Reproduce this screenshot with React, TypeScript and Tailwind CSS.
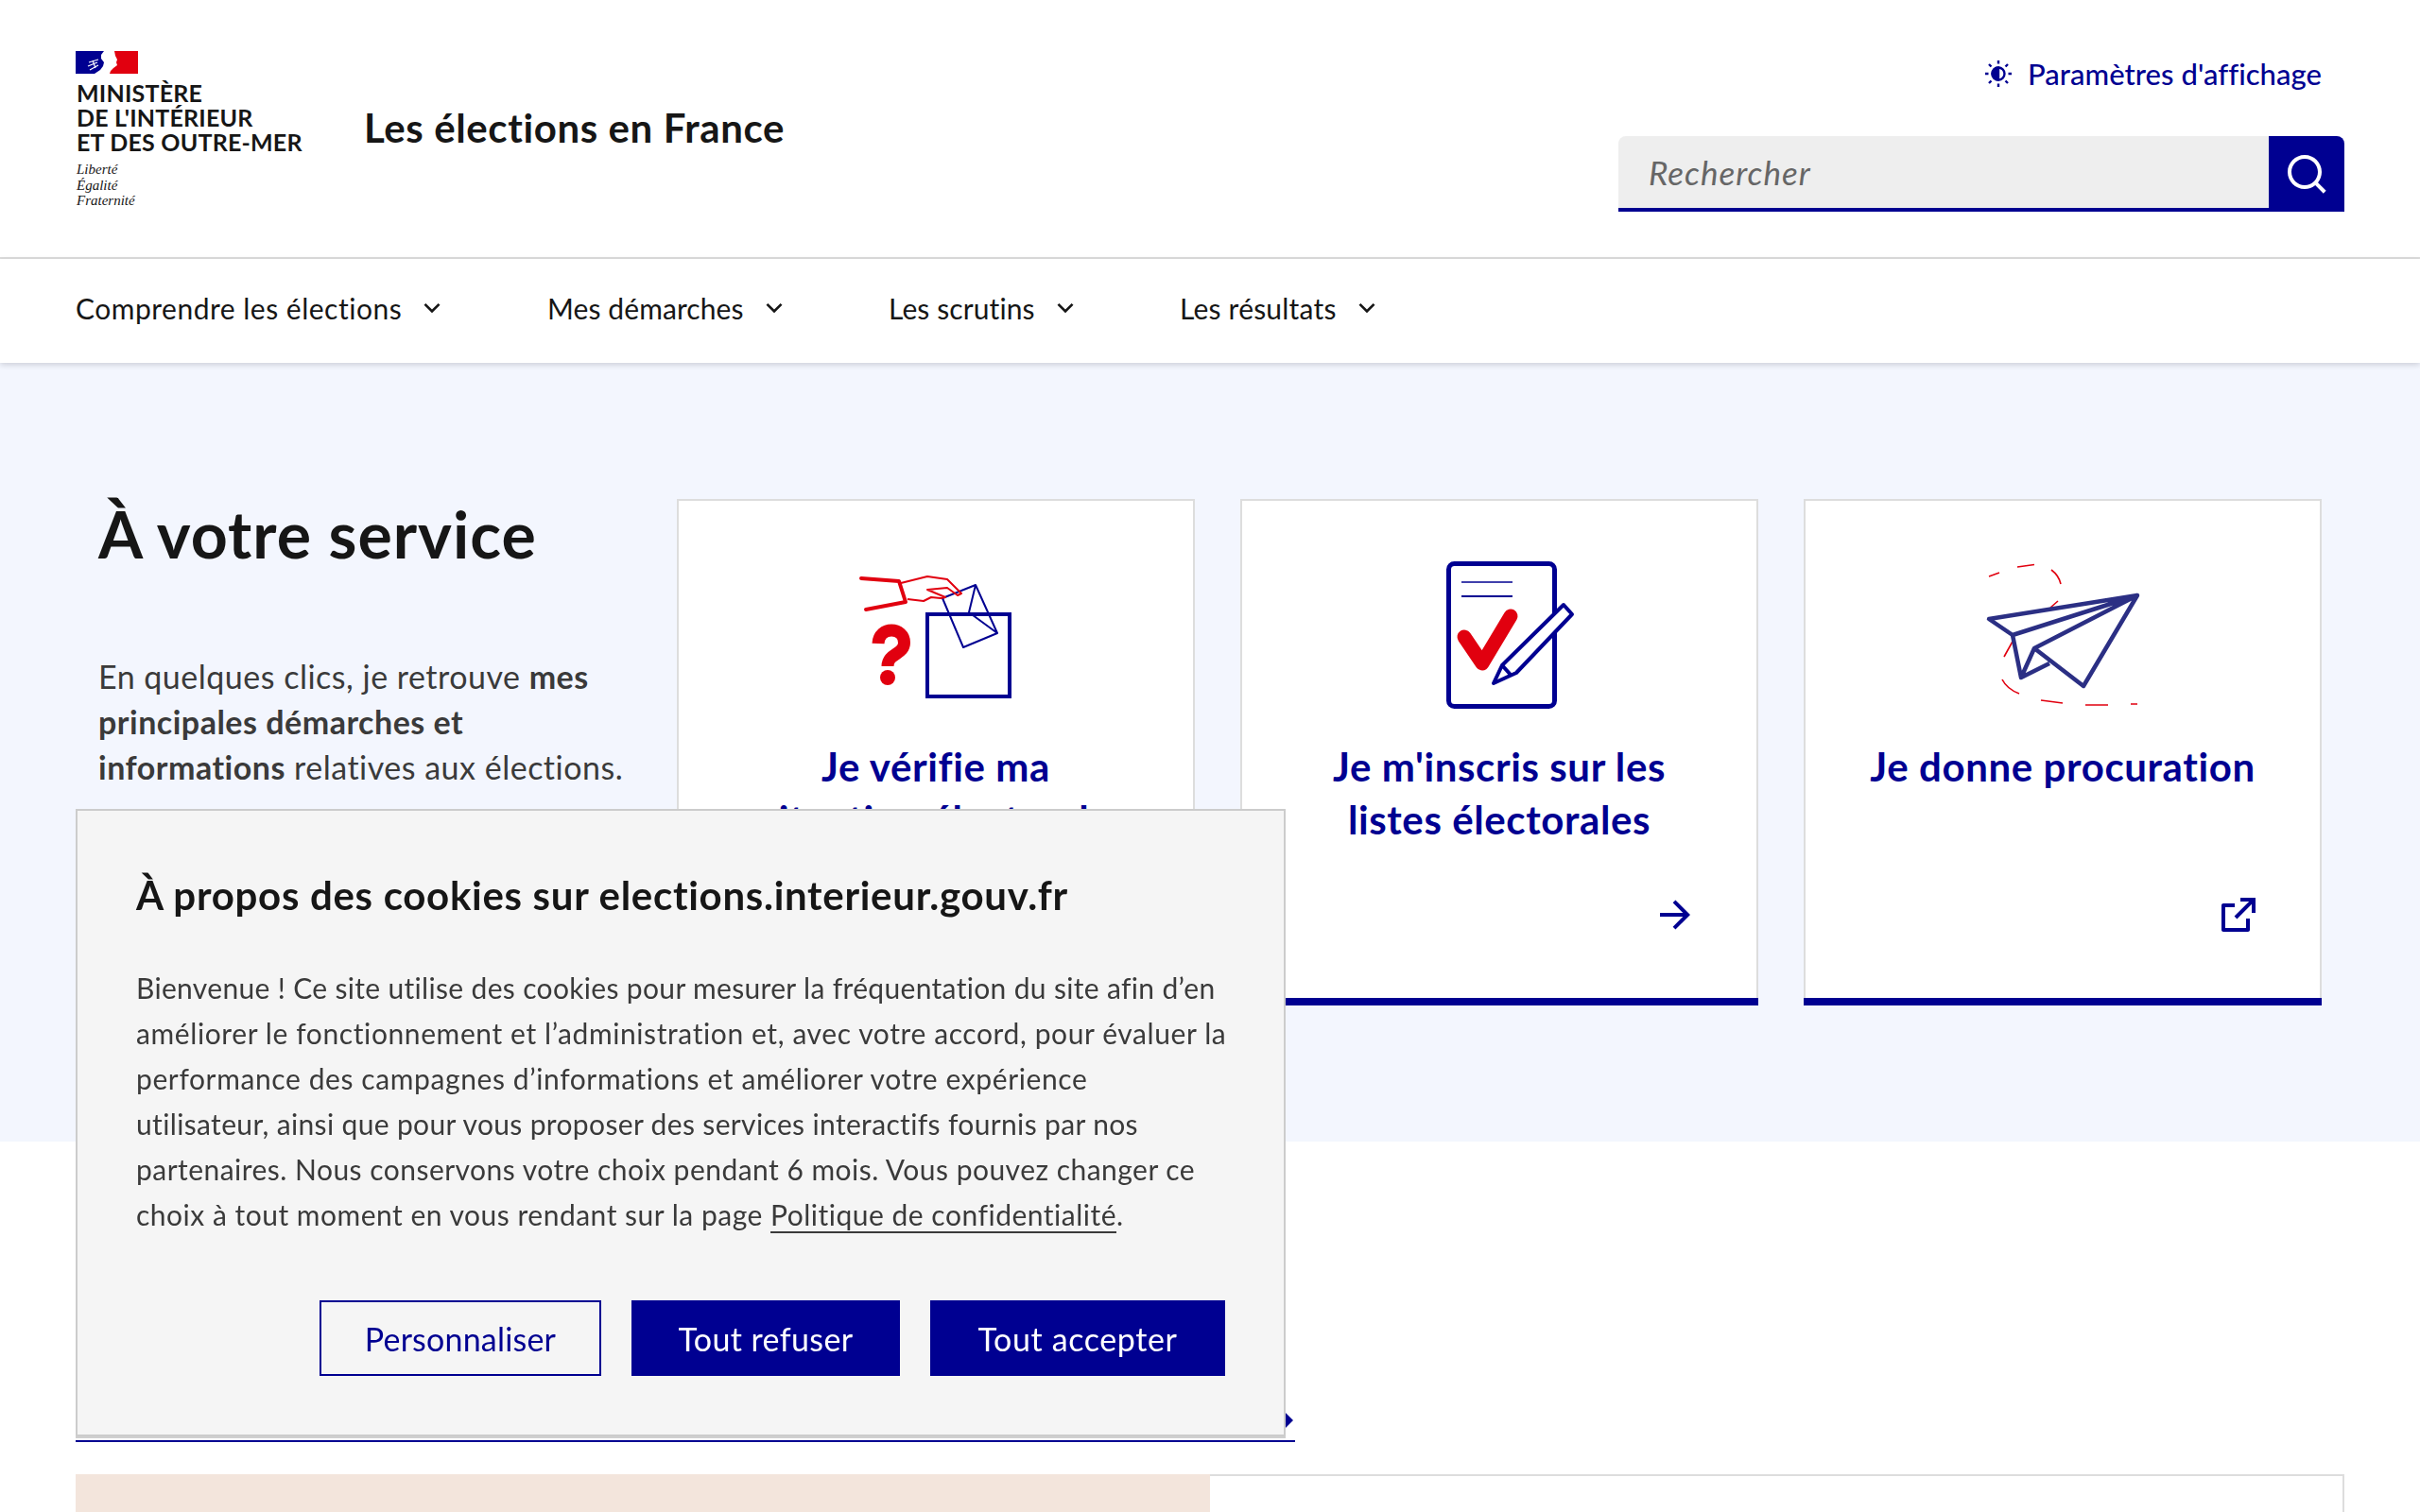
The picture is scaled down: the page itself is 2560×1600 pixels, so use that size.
import { RiArrowDownSLine, RiArrowRightLine, RiExternalLinkLine, RiSearchLine } from "react-icons/ri";
import type { ReactNode } from "react";

const navItems = [
  { label: "Comprendre les élections", cls: "w-[499px] tracking-[0.5px]" },
  { label: "Mes démarches", cls: "w-[361px] tracking-[0.1px]" },
  { label: "Les scrutins", cls: "w-[308px] tracking-[0.1px]" },
  { label: "Les résultats", cls: "w-[300px] tracking-[0.2px]" },
];

function Logo() {
  return (
    <div className="w-[245px]">
      <svg width="66" height="24" viewBox="0 0 66 24" className="block">
        <rect width="66" height="24" fill="#fff" />
        <path d="M0 0 H30 L27 4 L27 8 L30 12 L29 16 L26 20 L20 24 H0 Z" fill="#000091" />
        <path d="M66 0 H41 L42 5 L44 9 L43 12 L44 15 L40 18 L37 21 L36 24 H66 Z" fill="#e1000f" />
        <path d="M14 12 L24 9 M13 16 L23 12 M15 20 L24 15 M18 10 L21 18" stroke="#fff" strokeWidth="1.2" />
      </svg>
      <p className="mt-[7px] pl-[1px] text-[25px] font-bold leading-[26px] tracking-[0.2px] text-[#161616]">
        MINISTÈRE
        <br />
        DE L'INTÉRIEUR
        <br />
        ET DES OUTRE-MER
      </p>
      <p className="mt-[8px] pl-[1px] font-['Liberation_Serif',serif] text-[15px] italic leading-[16.5px] text-[#161616]">
        Liberté
        <br />
        Égalité
        <br />
        Fraternité
      </p>
    </div>
  );
}

function SunIcon() {
  return (
    <svg width="30" height="30" viewBox="0 0 30 30" fill="none" stroke="#000091" strokeWidth="2.4">
      <circle cx="15" cy="15" r="6.5" />
      <path d="M15 8.5 a6.5 6.5 0 0 0 0 13 Z" fill="#000091" />
      <path d="M15 1 V4.5 M15 25.5 V29 M1 15 H4.5 M25.5 15 H29 M5 5 L7.5 7.5 M22.5 22.5 L25 25 M25 5 L22.5 7.5 M7.5 22.5 L5 25" />
    </svg>
  );
}

function BallotIcon() {
  return (
    <svg width="170" height="154" viewBox="905 592 170 154" fill="none">
      <rect x="981" y="650" width="87" height="87" stroke="#000091" strokeWidth="4" />
      <path d="M997 633 L1032 619 L1055 670 L1019 685 Z M1032 619 L1025 648 L1055 670" stroke="#000091" strokeWidth="2" strokeLinejoin="round" />
      <path d="M911 612 L951 615 L958 637 L916 645" stroke="#e1000f" strokeWidth="4" strokeLinecap="round" strokeLinejoin="round" />
      <path d="M953 617 L981 610 L1002 613 L1017 628 L1013 630 L1002 622 L981 624 L1000 632 L995 633 L985 632 L977 636 L960 634" stroke="#e1000f" strokeWidth="2" strokeLinejoin="round" />
      <path d="M929 681 C930 662 956.5 663 956.5 680 C956.5 693 939 691 939 705" stroke="#e1000f" strokeWidth="13" />
      <circle cx="939" cy="717" r="8" fill="#e1000f" />
    </svg>
  );
}

function DocIcon() {
  return (
    <svg width="160" height="160" viewBox="1506 592 160 160" fill="none">
      <rect x="1532.5" y="596.5" width="112" height="151" rx="6" fill="#fff" stroke="#000091" strokeWidth="5" />
      <path d="M1546 616 H1600" stroke="#000091" strokeWidth="1.5" />
      <path d="M1546 631 H1600" stroke="#000091" strokeWidth="2" />
      <path d="M1549 674 L1568 702 L1598 652" stroke="#e1000f" strokeWidth="15" strokeLinecap="round" strokeLinejoin="round" />
      <path d="M1580 723 L1589 704 L1654 640 L1663 650 L1604 712 Z M1589 704 L1598 714" fill="#fff" stroke="#000091" strokeWidth="4" strokeLinejoin="round" />
    </svg>
  );
}

function PlaneIcon() {
  return (
    <svg width="170" height="160" viewBox="2097 592 170 160" fill="none">
      <path d="M2104 610 L2115 606 M2134 600 L2152 597.5 M2170 603 Q2178 609 2180 618 M2177 636 L2169 643 M2130 677 L2120 695 M2118 719 Q2123 729 2136 734 M2159 741 L2182 744 M2206 746 H2230 M2254 745 L2261 745" stroke="#e1000f" strokeWidth="1.6" />
      <path d="M2104 655 L2261 630 L2129 672 Z M2129 672 L2138 717 L2152 686 L2261 630 L2204 726 L2152 686 M2138 717 L2168 702" stroke="#2b2f84" strokeWidth="4.5" strokeLinejoin="round" />
    </svg>
  );
}

function ServiceCard({ icon, title, end }: { icon: ReactNode; title: ReactNode; end: ReactNode }) {
  return (
    <div className="flex h-[536px] w-[548px] flex-col items-center border-2 border-b-0 border-[#dddddd] bg-white">
      <div className="flex h-[253px] w-full items-start justify-center pt-[62px]">{icon}</div>
      <h3 className="px-[40px] text-center text-[42px] font-bold leading-[56px] tracking-[0.6px] text-[#000091]">{title}</h3>
      <div className="mt-auto flex w-full justify-end pb-[64px] pr-[62px] text-[#000091]">{end}</div>
      <div className="-mx-[2px] h-[8px] w-[548px] bg-[#000091]" />
    </div>
  );
}

function CookieBanner() {
  return (
    <div className="fixed left-[80px] top-[856px] h-[664px] w-[1280px] border-2 border-[#cccccc] bg-[#f5f5f5] px-[62px] pt-[61px] shadow-[0_2px_0_#cfcfcf]">
      <h2 className="text-[42px] font-bold leading-[56px] tracking-[0.7px] text-[#161616]">À propos des cookies sur elections.interieur.gouv.fr</h2>
      <p className="mt-[46px] whitespace-nowrap text-[30px] leading-[48px] tracking-[0.55px] text-[#3a3a3a]">
        <span className="tracking-[0.33px]">Bienvenue ! Ce site utilise des cookies pour mesurer la fréquentation du site afin d’en</span>
        <br />
        <span className="tracking-[0.6px]">améliorer le fonctionnement et l’administration et, avec votre accord, pour évaluer la</span>
        <br />
        <span className="tracking-[0.6px]">performance des campagnes d’informations et améliorer votre expérience</span>
        <br />
        <span className="tracking-[0.35px]">utilisateur, ainsi que pour vous proposer des services interactifs fournis par nos</span>
        <br />
        <span className="tracking-[0.47px]">partenaires. Nous conservons votre choix pendant 6 mois. Vous pouvez changer ce</span>
        <br />
        <span className="tracking-[0.5px]">
          choix à tout moment en vous rendant sur la page <span className="underline decoration-2 underline-offset-[6px]">Politique de confidentialité</span>.
        </span>
      </p>
      <div className="mt-[67px] flex justify-end gap-[32px]">
        <button className="h-[80px] w-[298px] border-2 border-[#000091] text-[34px] tracking-[0.2px] text-[#000091]">Personnaliser</button>
        <button className="h-[80px] w-[284px] bg-[#000091] text-[34px] tracking-[0.4px] text-white">Tout refuser</button>
        <button className="h-[80px] w-[312px] bg-[#000091] text-[34px] tracking-[0.6px] text-white">Tout accepter</button>
      </div>
    </div>
  );
}

export default function App() {
  return (
    <div className="relative h-screen overflow-hidden bg-white font-['Lato',sans-serif] text-[#161616] [font-variant-ligatures:none]">
      <header className="flex h-[274px] items-start justify-between border-b-2 border-[#dddddd] px-[80px] pt-[54px]">
        <div className="flex items-start">
          <Logo />
          <p className="ml-[60px] mt-[53px] text-[42px] font-bold leading-[56px] tracking-[0.6px]">Les élections en France</p>
        </div>
        <div className="flex flex-col items-end">
          <a className="mr-[24px] flex items-center gap-[16px] text-[31px] font-medium leading-[48px] tracking-[0.05px] text-[#000091]">
            <SunIcon />
            Paramètres d'affichage
          </a>
          <div className="mt-[42px] flex h-[80px] w-[768px] overflow-hidden rounded-t-[8px] border-b-4 border-[#000091]">
            <div className="flex flex-1 items-center bg-[#eeeeee] pl-[32px] text-[35px] italic tracking-[1px] text-[#666666]">Rechercher</div>
            <div className="flex h-[80px] w-[80px] items-center justify-center bg-[#000091] text-white">
              <RiSearchLine size={48} />
            </div>
          </div>
        </div>
      </header>

      <nav className="relative z-10 flex h-[110px] items-center px-[80px] pb-[6px] shadow-[0_2px_6px_rgba(0,0,18,0.16)]">
        {navItems.map((item) => (
          <div key={item.label} className={`flex items-center gap-[16px] text-[30px] ${item.cls}`}>
            {item.label}
            <RiArrowDownSLine size={32} />
          </div>
        ))}
      </nav>

      <section className="flex h-[824px] bg-[#f3f6fe] pl-[104px] pt-[141px]">
        <div className="w-[612px]">
          <h1 className="text-[68px] font-bold leading-[80px] tracking-[1px]">À votre service</h1>
          <p className="mt-[87px] text-[34px] leading-[48px] tracking-[0.5px] text-[#3a3a3a]">
            En quelques clics, je retrouve <b>mes</b>
            <br />
            <b>principales démarches et</b>
            <br />
            <b>informations</b> relatives aux élections.
          </p>
        </div>
        <div className="mt-[3px] flex gap-[48px]">
          <ServiceCard
            icon={<BallotIcon />}
            title={
              <>
                Je vérifie ma
                <br />
                situation électorale
              </>
            }
            end={<RiArrowRightLine size={48} />}
          />
          <ServiceCard
            icon={<DocIcon />}
            title={
              <>
                Je m'inscris sur les
                <br />
                listes électorales
              </>
            }
            end={<RiArrowRightLine size={48} />}
          />
          <ServiceCard icon={<PlaneIcon />} title="Je donne procuration" end={<RiExternalLinkLine size={48} />} />
        </div>
      </section>

      <section className="px-[80px]">
        <div className="flex h-[318px] w-[1290px] items-end justify-end border-b-2 border-[#000091] text-[#000091]">
          <RiArrowRightLine size={48} className="-mb-[3px] -mr-[6px]" />
        </div>
        <div className="mt-[34px] flex h-[400px] w-[2400px] border-2 border-b-0 border-l-0 border-[#dddddd]">
          <div className="-mt-[2px] w-[1200px] bg-[#f3e5dc]" />
        </div>
      </section>

      <CookieBanner />
    </div>
  );
}
